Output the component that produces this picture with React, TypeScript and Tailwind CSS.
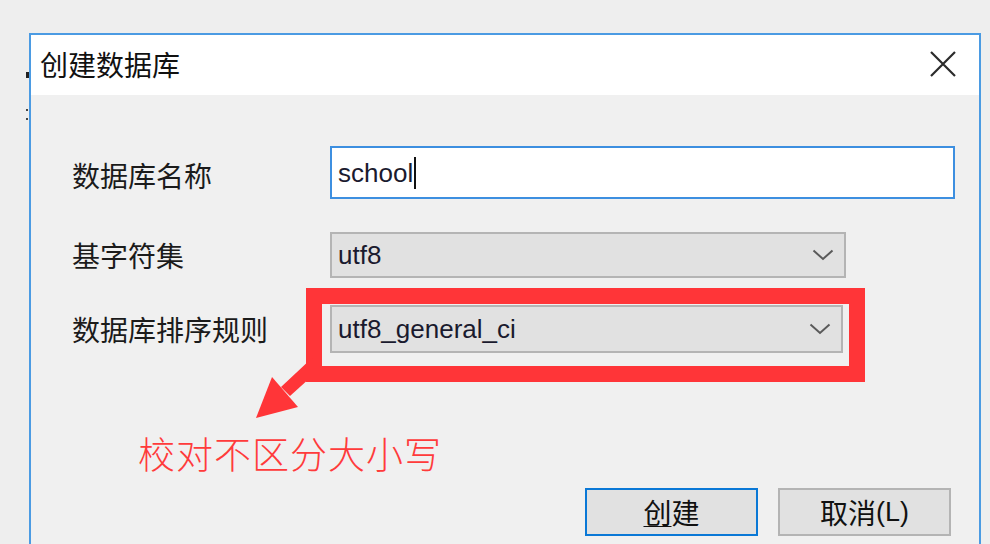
import React from "react";

const cjk = { fontFamily: '"Noto Sans CJK SC", "Noto Sans", sans-serif' };
const latin = { fontFamily: '"Liberation Sans", Arial, sans-serif' };

function Chevron() {
  return (
    <svg width="22" height="12" viewBox="0 0 22 12" className="shrink-0">
      <path d="M1.5 1.5 L11 10 L20.5 1.5" fill="none" stroke="#5a5a5a" strokeWidth="2" />
    </svg>
  );
}

function Select({ value, width }: { value: string; width: string }) {
  return (
    <div
      className={`flex items-center justify-between border-2 border-[#b4b4b4] bg-[#e1e1e1] pl-[6px] pr-[10px] ${width}`}
    >
      <span className="text-[26px] leading-none text-[#1a1a2e]" style={latin}>
        {value}
      </span>
      <Chevron />
    </div>
  );
}

export default function App() {
  return (
    <div className="relative h-[544px] w-[990px] overflow-hidden bg-[#eeeeee] pt-[33px] pl-[29px]">
      {/* bits of the window behind */}
      <span className="absolute top-[72px] left-[26px] h-[6px] w-[3px] bg-[#222]" />
      <span className="absolute top-[109px] left-[26px] h-[2px] w-[2px] bg-[#444]" />
      <span className="absolute top-[118px] left-[26px] h-[2px] w-[2px] bg-[#444]" />

      {/* dialog */}
      <div className="flex h-[520px] w-[952px] flex-col border-2 border-b-0 border-[#4b9be3]">
        {/* title bar */}
        <div className="flex h-[60px] items-center justify-between bg-white pr-[23px] pl-[9px] pb-[3px]">
          <span className="text-[28px] leading-none text-[#111]" style={cjk}>
            创建数据库
          </span>
          <svg width="26" height="26" viewBox="0 0 26 26">
            <path d="M1 1 L25 25 M25 1 L1 25" stroke="#2b2b2b" strokeWidth="2.2" />
          </svg>
        </div>

        {/* body */}
        <div className="flex flex-1 flex-col bg-[#f0f0f0] pl-[41px]" style={cjk}>
          <div className="mt-[51px] flex items-center">
            <span className="w-[258px] pt-[4px] text-[28px] leading-none text-[#1b1b1b]">数据库名称</span>
            <div className="flex h-[53px] w-[625px] items-center border-2 border-[#3d8fe0] bg-white pl-[6px]">
              <span className="text-[26px] leading-none text-[#1a1a2e]" style={latin}>
                school
              </span>
              <span className="ml-[1px] h-[32px] w-[2px] bg-[#111]" />
            </div>
          </div>

          <div className="mt-[33px] flex items-center">
            <span className="w-[258px] text-[28px] leading-none text-[#1b1b1b]">基字符集</span>
            <Select value="utf8" width="h-[46px] w-[516px]" />
          </div>

          <div className="mt-[27px] flex items-center">
            <span className="w-[258px] text-[28px] leading-none text-[#1b1b1b]">数据库排序规则</span>
            <Select value="utf8_general_ci" width="h-[48px] w-[513px]" />
          </div>

          <div className="mt-[80px] ml-[66px] text-[37px] leading-[40px] font-light tracking-[1px] text-[#ff3b3b]">
            校对不区分大小写
          </div>

          <div className="mt-[15px] flex justify-end gap-[20px] pr-[28px]">
            <button className="flex h-[48px] w-[173px] items-center justify-center border-2 border-[#0a78d6] bg-[#e1e1e1] text-[28px] leading-none text-[#111]">
              <span className="underline decoration-1 underline-offset-[2px]">创</span>建
            </button>
            <button className="flex h-[48px] w-[173px] items-center justify-center border-2 border-[#b4b4b4] bg-[#e1e1e1] text-[28px] leading-none text-[#111]">
              取消<span style={latin} className="text-[27px]">(L)</span>
            </button>
          </div>
        </div>
      </div>

      {/* red annotation */}
      <div className="pointer-events-none absolute top-[288px] left-[306px] h-[94px] w-[559px] border-[16px] border-[#ff3538]" />
      <svg className="pointer-events-none absolute top-0 left-0" width="990" height="544">
        <polygon points="281,387 290,396 321,368 312,358" fill="#ff3538" />
        <polygon points="272,377 298,407 256,418" fill="#ff3538" />
      </svg>
    </div>
  );
}
